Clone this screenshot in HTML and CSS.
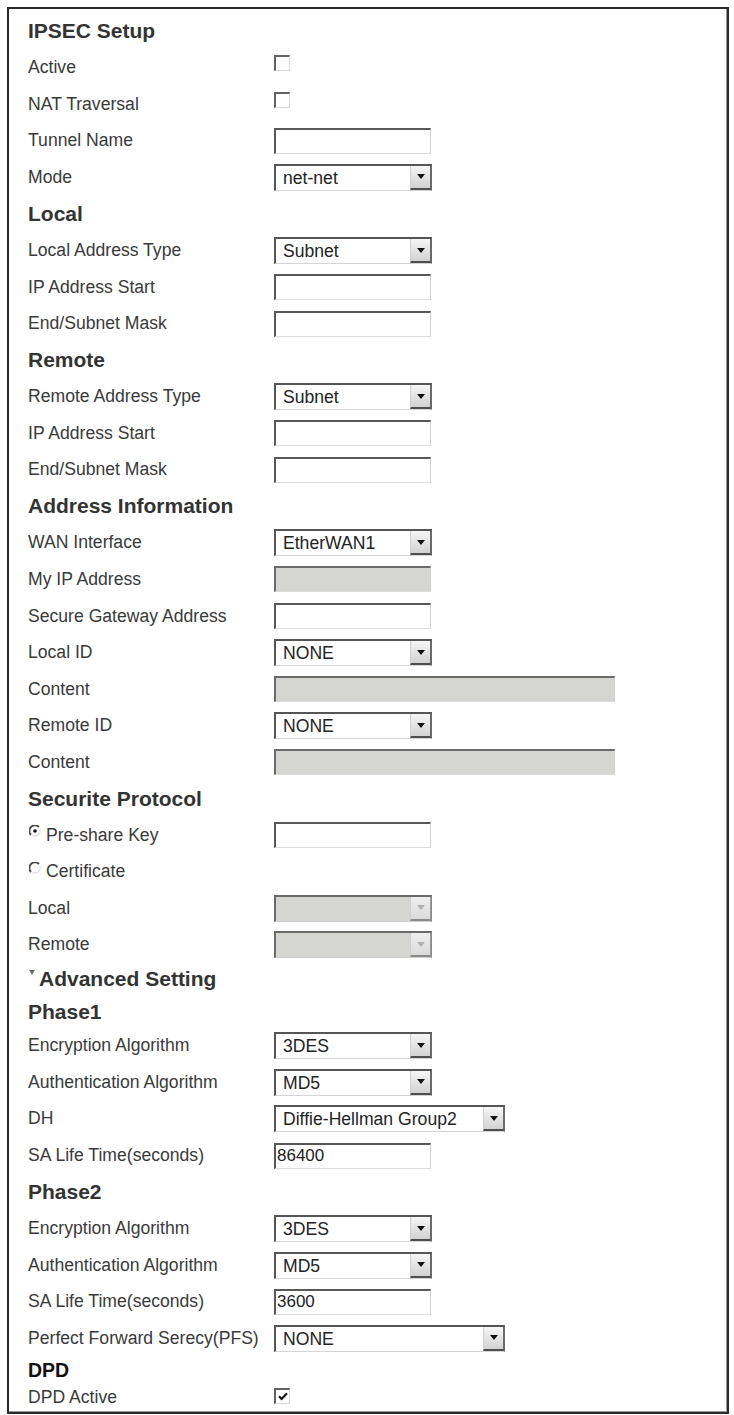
FILE: index.html
```html
<!DOCTYPE html>
<html lang="en">
<head>
<meta charset="utf-8">
<title>IPSEC Setup</title>
<link rel="stylesheet" href="styles.css">
</head>
<body>
<form class="frame">

  <h2 class="heading">IPSEC Setup</h2>
  <div class="row"><span class="label">Active</span><span class="check"></span></div>
  <div class="row"><span class="label">NAT Traversal</span><span class="check"></span></div>
  <div class="row"><span class="label">Tunnel Name</span><input class="field" type="text"></div>
  <div class="row"><span class="label">Mode</span><div class="select"><span class="value">net-net</span><span class="btn"><svg width="8" height="5" viewBox="0 0 8 5"><path d="M0 0h8L4 5z"/></svg></span></div></div>

  <h2 class="heading">Local</h2>
  <div class="row"><span class="label">Local Address Type</span><div class="select"><span class="value">Subnet</span><span class="btn"><svg width="8" height="5" viewBox="0 0 8 5"><path d="M0 0h8L4 5z"/></svg></span></div></div>
  <div class="row"><span class="label">IP Address Start</span><input class="field" type="text"></div>
  <div class="row"><span class="label">End/Subnet Mask</span><input class="field" type="text"></div>

  <h2 class="heading">Remote</h2>
  <div class="row"><span class="label">Remote Address Type</span><div class="select"><span class="value">Subnet</span><span class="btn"><svg width="8" height="5" viewBox="0 0 8 5"><path d="M0 0h8L4 5z"/></svg></span></div></div>
  <div class="row"><span class="label">IP Address Start</span><input class="field" type="text"></div>
  <div class="row"><span class="label">End/Subnet Mask</span><input class="field" type="text"></div>

  <h2 class="heading">Address Information</h2>
  <div class="row"><span class="label">WAN Interface</span><div class="select"><span class="value">EtherWAN1</span><span class="btn"><svg width="8" height="5" viewBox="0 0 8 5"><path d="M0 0h8L4 5z"/></svg></span></div></div>
  <div class="row"><span class="label">My IP Address</span><input class="field" type="text" disabled></div>
  <div class="row"><span class="label">Secure Gateway Address</span><input class="field" type="text"></div>
  <div class="row"><span class="label">Local ID</span><div class="select"><span class="value">NONE</span><span class="btn"><svg width="8" height="5" viewBox="0 0 8 5"><path d="M0 0h8L4 5z"/></svg></span></div></div>
  <div class="row"><span class="label">Content</span><input class="field wide" type="text" disabled></div>
  <div class="row"><span class="label">Remote ID</span><div class="select"><span class="value">NONE</span><span class="btn"><svg width="8" height="5" viewBox="0 0 8 5"><path d="M0 0h8L4 5z"/></svg></span></div></div>
  <div class="row"><span class="label">Content</span><input class="field wide" type="text" disabled></div>

  <h2 class="heading">Securite Protocol</h2>
  <div class="row">
    <span class="label radio-label">
      <svg class="radio" width="12" height="12" viewBox="0 0 12 12"><circle cx="6" cy="6" r="5.2" fill="#fff"/><path d="M10 2A5.4 5.4 0 0 0 2 10" fill="none" stroke="#4a4a4a" stroke-width="1.8"/><path d="M10.6 3.4A5.4 5.4 0 0 1 3.4 10.6" fill="none" stroke="#e0e0e0" stroke-width="1.2"/><circle cx="6" cy="6" r="1.8" fill="#111"/></svg>
      Pre-share Key
    </span>
    <input class="field" type="text">
  </div>
  <div class="row">
    <span class="label radio-label">
      <svg class="radio" width="12" height="12" viewBox="0 0 12 12"><circle cx="6" cy="6" r="5.2" fill="#fff"/><path d="M10 2A5.4 5.4 0 0 0 2 10" fill="none" stroke="#4a4a4a" stroke-width="1.8"/><path d="M10.6 3.4A5.4 5.4 0 0 1 3.4 10.6" fill="none" stroke="#e0e0e0" stroke-width="1.2"/></svg>
      Certificate
    </span>
  </div>
  <div class="row"><span class="label">Local</span><div class="select off"><span class="value"></span><span class="btn"><svg width="8" height="5" viewBox="0 0 8 5"><path d="M0 0h8L4 5z"/></svg></span></div></div>
  <div class="row"><span class="label">Remote</span><div class="select off"><span class="value"></span><span class="btn"><svg width="8" height="5" viewBox="0 0 8 5"><path d="M0 0h8L4 5z"/></svg></span></div></div>

  <h2 class="heading short toggle"><svg class="caret" width="6" height="5" viewBox="0 0 6 5"><path d="M0 0h6L3 5z"/></svg>Advanced Setting</h2>

  <h2 class="heading short">Phase1</h2>
  <div class="row"><span class="label">Encryption Algorithm</span><div class="select"><span class="value">3DES</span><span class="btn"><svg width="8" height="5" viewBox="0 0 8 5"><path d="M0 0h8L4 5z"/></svg></span></div></div>
  <div class="row"><span class="label">Authentication Algorithm</span><div class="select"><span class="value">MD5</span><span class="btn"><svg width="8" height="5" viewBox="0 0 8 5"><path d="M0 0h8L4 5z"/></svg></span></div></div>
  <div class="row"><span class="label">DH</span><div class="select long"><span class="value">Diffie-Hellman Group2</span><span class="btn"><svg width="8" height="5" viewBox="0 0 8 5"><path d="M0 0h8L4 5z"/></svg></span></div></div>
  <div class="row"><span class="label">SA Life Time(seconds)</span><input class="field" type="text" value="86400"></div>

  <h2 class="heading">Phase2</h2>
  <div class="row"><span class="label">Encryption Algorithm</span><div class="select"><span class="value">3DES</span><span class="btn"><svg width="8" height="5" viewBox="0 0 8 5"><path d="M0 0h8L4 5z"/></svg></span></div></div>
  <div class="row"><span class="label">Authentication Algorithm</span><div class="select"><span class="value">MD5</span><span class="btn"><svg width="8" height="5" viewBox="0 0 8 5"><path d="M0 0h8L4 5z"/></svg></span></div></div>
  <div class="row"><span class="label">SA Life Time(seconds)</span><input class="field" type="text" value="3600"></div>
  <div class="row"><span class="label">Perfect Forward Serecy(PFS)</span><div class="select long"><span class="value">NONE</span><span class="btn"><svg width="8" height="5" viewBox="0 0 8 5"><path d="M0 0h8L4 5z"/></svg></span></div></div>

  <h2 class="heading dpd">DPD</h2>
  <div class="row last"><span class="label">DPD Active</span><span class="check on"><svg width="10" height="9" viewBox="0 0 10 9"><path d="M1 4.2l2.6 2.8L9 1.2" fill="none" stroke="#111" stroke-width="2"/></svg></span></div>

</form>
</body>
</html>
```

FILE: styles.css
```css
html, body {
  margin: 0;
  padding: 0;
  background: #fff;
}

body {
  font-family: "Liberation Sans", Arial, sans-serif;
  color: #3a3a3a;
}

/* outer framed panel */
.frame {
  box-sizing: border-box;
  width: 722px;
  margin: 7px 0 0 7px;
  padding: 4px 0 0 19px;
  border: 2px solid #2a2a2a;
  box-shadow: inset -1px -1px 0 #9a9a9a;
  --row: 36.55px;
}

.heading {
  margin: 0;
  height: var(--row);
  display: flex;
  align-items: center;
  font-size: 21px;
  font-weight: bold;
  color: #333;
}

.heading.short {
  height: 32.2px;
}

.toggle .caret {
  fill: #6a6a6a;
  margin: 0 4px 13px 1px;
}

.heading.dpd {
  height: 27px;
  font-size: 19.5px;
  color: #111;
}

.row {
  height: var(--row);
  display: flex;
  align-items: center;
}

.row.last {
  height: 28px;
}

.label {
  flex: none;
  width: 246px;
  font-size: 17.6px;
  white-space: nowrap;
}

.radio-label {
  display: flex;
  align-items: center;
}

.radio {
  flex: none;
  margin: 0 5px 8px 1px;
}

/* checkbox, drawn as a sunken square */
.check {
  box-sizing: border-box;
  width: 16px;
  height: 16px;
  margin-bottom: 9px;
  background: #fff;
  border-style: solid;
  border-width: 2px 1px 1px 2px;
  border-color: #626262 #d8d8d8 #d8d8d8 #626262;
  display: flex;
  align-items: center;
  justify-content: center;
}

.row.last .check {
  margin-bottom: 4px;
}

/* text field */
.field {
  box-sizing: border-box;
  width: 157px;
  height: 26px;
  margin: 0;
  padding: 0 0 0 1px;
  font-family: inherit;
  font-size: 17px;
  color: #222;
  background: #fff;
  border-style: solid;
  border-width: 2px 1px 1px 2px;
  border-color: #585858 #d2d2d2 #dedede #585858;
  outline: none;
}

.field:disabled {
  background: #d5d5d2;
  border-color: #6a6a6a #cfcfcf #dadada #6a6a6a;
}

.field.wide {
  width: 341px;
}

/* drop-down list */
.select {
  box-sizing: border-box;
  width: 158px;
  height: 27px;
  display: flex;
  background: #fff;
  border-style: solid;
  border-width: 2px 1px 1px 2px;
  border-color: #555 #6a6a6a #d4d4d4 #555;
}

.select.long {
  width: 231px;
}

.select .value {
  flex: 1;
  padding-left: 7px;
  font-size: 17.6px;
  line-height: 24px;
  color: #232323;
  white-space: nowrap;
  overflow: hidden;
}

.select .btn {
  flex: none;
  box-sizing: border-box;
  width: 21px;
  display: flex;
  align-items: center;
  justify-content: center;
  background: linear-gradient(#f6f6f6, #d2d2d2);
  border-left: 1px solid #cfcfcf;
  border-bottom: 2px solid #4e4e4e;
  border-right: 1px solid #6a6a6a;
}

.select .btn svg {
  fill: #111;
}

.select.off {
  background: #d5d5d2;
  border-color: #6a6a6a #8a8a8a #cfcfcf #6a6a6a;
}

.select.off .btn {
  background: linear-gradient(#efefef, #dadada);
  border-bottom-color: #8a8a8a;
  border-right-color: #9a9a9a;
}

.select.off .btn svg {
  fill: #b0b0b0;
}
```
